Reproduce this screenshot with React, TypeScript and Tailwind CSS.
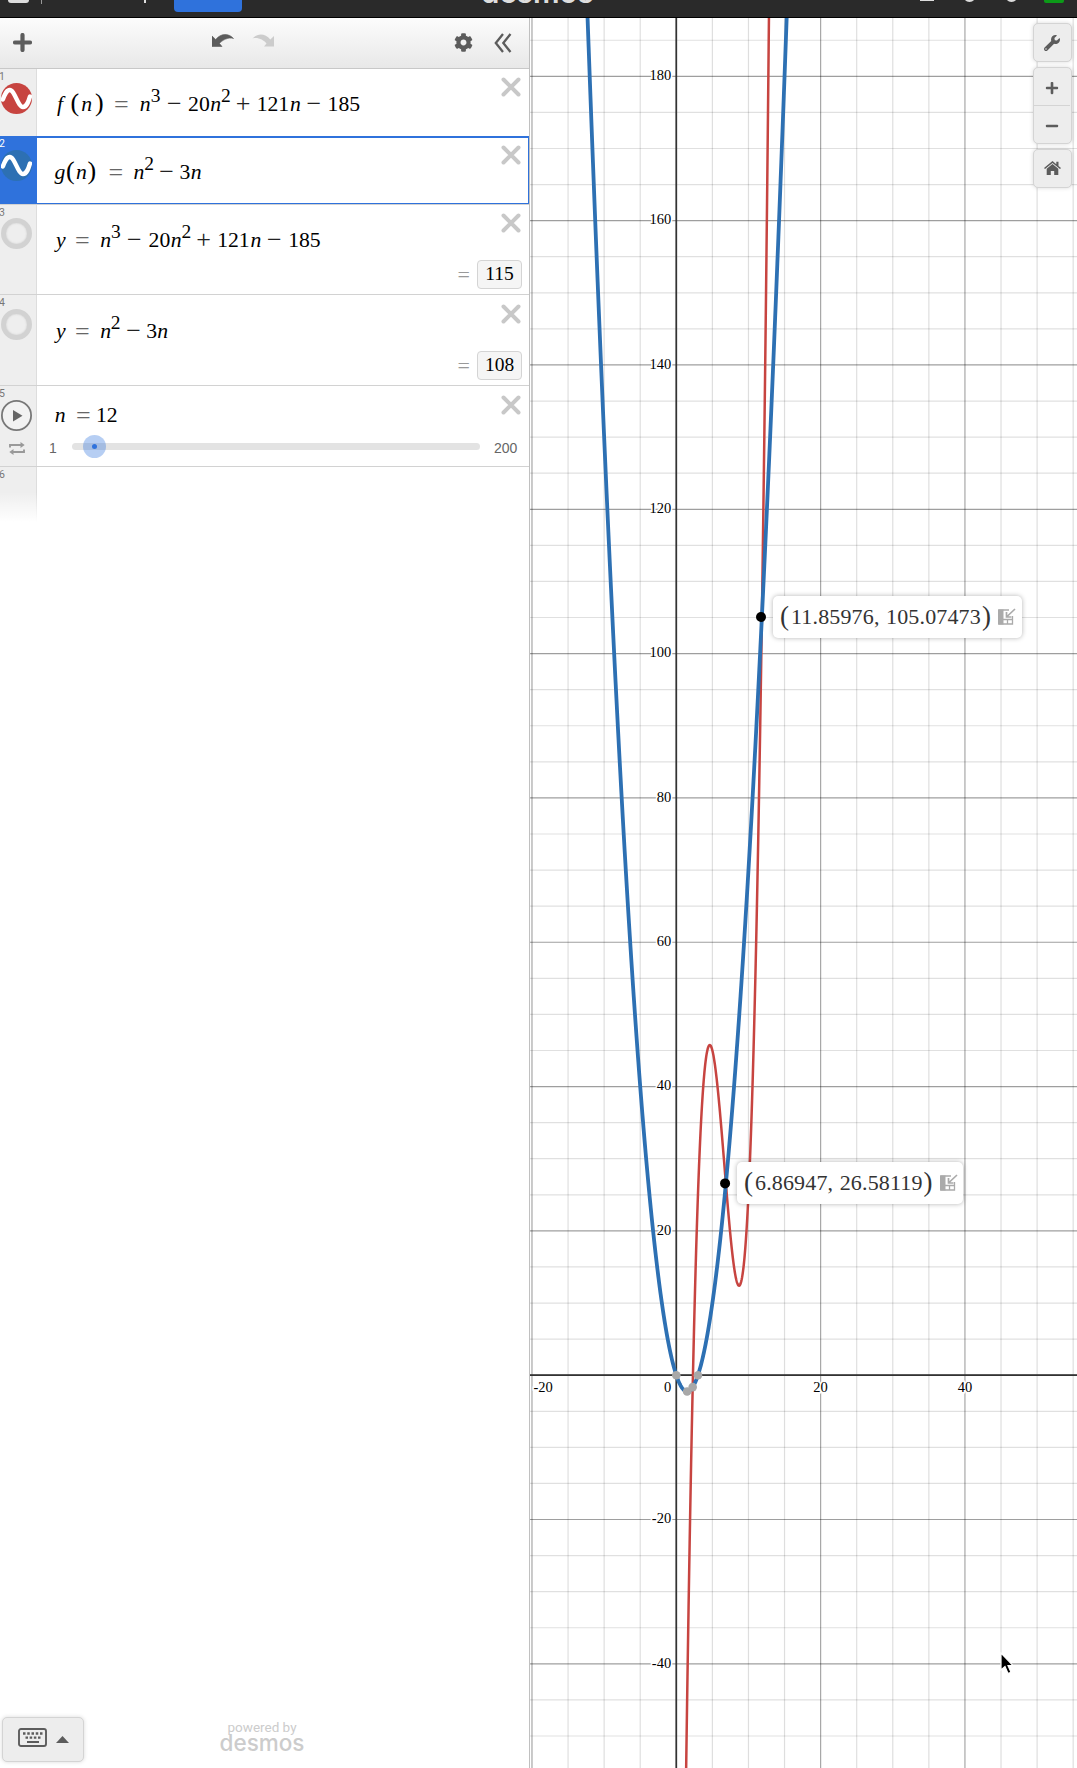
import React from "react";
import { FaWrench, FaPlus, FaMinus, FaCog } from "react-icons/fa";

type Kind = "i" | "d" | "s" | "o" | "e" | "p";
type Token = [Kind, string, number];

const tokenClass: Record<Kind, string> = {
  i: "italic",
  d: "",
  s: "relative -top-[9.5px] text-[19.5px]",
  o: "relative top-px text-[26px] text-[#222]",
  e: "relative top-[2px] text-[26px] text-[#666]",
  p: "text-[26px]",
};

// Each token: kind, glyphs, x position; the gap to the next token gives its width.
const cubic = (x: number, d: number): Token[] => [
  ["i", "n", x],
  ["s", "3", x + 11.2 - d],
  ["o", "−", x + 27.3 - d],
  ["d", "20", x + 48.4],
  ["i", "n", x + 70.7],
  ["s", "2", x + 81.4],
  ["o", "+", x + 96],
  ["d", "121", x + 117],
  ["i", "n", x + 150.3],
  ["o", "−", x + 166.8],
  ["d", "185", x + 188],
];

const equations: Token[][] = [
  [["i", "f", 57], ["p", "(", 70.5], ["i", "n", 81.2], ["p", ")", 95], ["e", "=", 114], ...cubic(139.7, 0)],
  [["i", "g", 54.5], ["p", "(", 66], ["i", "n", 76], ["p", ")", 87.5], ["e", "=", 108.5], ["i", "n", 133.6], ["s", "2", 144.3], ["o", "−", 159.2], ["d", "3", 179.5], ["i", "n", 190.7]],
  [["i", "y", 56], ["e", "=", 75], ...cubic(100.2, 0.5)],
  [["i", "y", 56], ["e", "=", 75], ["i", "n", 100.2], ["s", "2", 110.8], ["o", "−", 126.2], ["d", "3", 146.3], ["i", "n", 157.3]],
  [["i", "n", 54.7], ["e", "=", 76], ["d", "12", 96]],
];

function Equation({ tokens }: { tokens: Token[] }) {
  return (
    <div className="flex h-8 items-baseline whitespace-nowrap font-['Liberation_Serif',serif] text-[21.7px] leading-8 text-black" style={{ paddingLeft: tokens[0][2] - 37 }}>
      {tokens.map(([k, t, x], i) => (
        <span key={i} className={"block shrink-0 leading-8 " + tokenClass[k]} style={{ width: i + 1 < tokens.length ? tokens[i + 1][2] - x : "auto" }}>
          {t}
        </span>
      ))}
    </div>
  );
}

function Close({ className = "top-[8px]" }: { className?: string }) {
  return (
    <svg className={"absolute right-[8.5px] " + className} width="20" height="20" viewBox="0 0 20 20">
      <path d="M2.500 2.500 17.500 17.500M17.500 2.500 2.500 17.500" stroke="#c8c8c8" strokeWidth="4" strokeLinecap="round" />
    </svg>
  );
}

function Wave({ color }: { color: string }) {
  return (
    <svg width="31" height="31" viewBox="0 0 31 31">
      <circle cx="15.500" cy="15.500" r="15.500" fill={color} />
      <path d="M1.800 16.500C3.800 11.500 5.500 7 8.800 7c5 0 8 17 13.200 17 3.800 0 5.500-5.500 7-10.500" fill="none" stroke="#fff" strokeWidth="4.400" strokeLinecap="round" />
    </svg>
  );
}

const Ring = () => <div className="size-[31px] rounded-full border-[5px] border-[#d2d2d2] bg-[#eee] shadow-[inset_0_0_2px_#ccc]" />;

function Gutter({ n, active, low, children }: { n: number; active?: boolean; low?: boolean; children?: React.ReactNode }) {
  return (
    <div className={"relative w-[37px] shrink-0 border-r pl-px " + (low ? "pt-[14px] " : "pt-[13px] ") + (active ? "border-[#2f72dc] bg-[#2f72dc]" : "border-[#ddd] bg-[#eee]")}>
      <span className={"absolute left-[-1px] top-[2px] font-[Roboto,sans-serif] text-[10.5px] leading-3 " + (active ? "text-white" : "text-[#777]")}>{n}</span>
      {children}
    </div>
  );
}

function Result({ value }: { value: string }) {
  return (
    <div className="absolute bottom-[5px] right-[7px] flex items-center gap-[7px] font-['Liberation_Serif',serif]">
      <span className="pt-0.5 text-[22px] leading-7 text-[#999]">=</span>
      <span className="flex h-[29px] w-[45px] items-center justify-center rounded-[4px] border border-[#d4d4d4] bg-[#f5f5f5] text-[19.5px] text-black">{value}</span>
    </div>
  );
}

function Expressions() {
  const row = "relative flex border-b border-[#d2d2d2]";
  return (
    <div className="flex flex-col">
      <div className="relative flex h-[67px]">
        <Gutter n={1} low><Wave color="#c74440" /></Gutter>
        <div className="flex-1 pt-[18px]"><Equation tokens={equations[0]} /></div>
        <Close className="top-[7.500px]" />
      </div>
      <div className="relative flex h-[69px] border-b border-[#d2d2d2]">
        <Gutter n={2} active low><Wave color="#2d70b3" /></Gutter>
        <div className="flex-1 border-b border-r border-t-2 border-[#2f72dc] pt-[17px]"><Equation tokens={equations[1]} /></div>
        <Close className="top-[8.500px]" />
      </div>
      <div className={row + " h-[90px]"}>
        <Gutter n={3}><Ring /></Gutter>
        <div className="flex-1 pt-[18px]"><Equation tokens={equations[2]} /></div>
        <Close className="top-[7.500px]" />
        <Result value="115" />
      </div>
      <div className={row + " h-[91px]"}>
        <Gutter n={4} low><Ring /></Gutter>
        <div className="flex-1 pt-[19px]"><Equation tokens={equations[3]} /></div>
        <Close className="top-[8.500px]" />
        <Result value="108" />
      </div>
      <div className={row + " h-[81px]"}>
        <Gutter n={5} low>
          <svg width="31" height="31" viewBox="0 0 31 31">
            <circle cx="15.500" cy="15.500" r="14.600" fill="#f2f2f2" stroke="#777" strokeWidth="1.800" />
            <path d="M12 10v11.500l9.500-5.700z" fill="#666" />
          </svg>
          <svg className="ml-2 mt-[11px]" width="16" height="13" viewBox="0 0 16 13" fill="none" stroke="#999" strokeWidth="1.900">
            <path d="M1 5.500V3h12M15 7.500V10H3" />
            <path d="M11.500 0 15.700 3 11.500 6zM4.500 7 .3 10l4.200 3z" fill="#999" stroke="none" />
          </svg>
        </Gutter>
        <div className="flex-1 pt-[12px]">
          <Equation tokens={equations[4]} />
          <div className="mt-[4px] flex h-6 items-center font-['Liberation_Sans',sans-serif] text-[14px] text-[#666]">
            <span className="w-[35px] pl-3 pt-1">1</span>
            <div className="relative h-[7px] w-[408px] rounded-full bg-[#e3e3e3]">
              <div className="absolute left-[11px] top-[-8px] flex size-[23px] items-center justify-center rounded-full bg-[#2f72dc]/35">
                <div className="size-[5px] rounded-full bg-[#2f72dc]" />
              </div>
            </div>
            <span className="pl-[14px] pt-1">200</span>
          </div>
        </div>
        <Close className="top-[8.500px]" />
      </div>
      <div className="relative flex h-[55px]">
        <Gutter n={6} />
        <div className="absolute inset-x-0 bottom-0 h-[30px] bg-gradient-to-b from-white/0 to-white" />
      </div>
    </div>
  );
}

const OX = 146.3; // origin inside the plot
const OY = 1357.2;
const U = 7.216; // pixels per unit
const sx = (x: number) => OX + x * U;
const sy = (y: number) => OY - y * U;

function curve(f: (x: number) => number, a: number, b: number) {
  const pts: string[] = [];
  for (let x = a; x <= b; x += 0.05) pts.push(sx(x).toFixed(2) + "," + sy(f(x)).toFixed(2));
  return pts.join(" ");
}

const f = (n: number) => n ** 3 - 20 * n * n + 121 * n - 185;
const g = (n: number) => n * n - 3 * n;

function Plot() {
  const xs = Array.from({ length: 16 }, (_, i) => -20 + i * 5);
  const ys = Array.from({ length: 48 }, (_, i) => -50 + i * 5);
  const yl = [180, 160, 140, 120, 100, 80, 60, 40, 20, -20, -40];
  return (
    <svg className="block" width="547" height="1750" viewBox="0 0 547 1750">
      {xs.map((x) => <line key={x} x1={sx(x)} x2={sx(x)} y1="0" y2="1750" stroke="#000" strokeOpacity={x % 20 ? 0.13 : 0.35} strokeWidth="1.200" />)}
      {ys.map((y) => <line key={y} y1={sy(y)} y2={sy(y)} x1="0" x2="547" stroke="#000" strokeOpacity={y % 20 ? 0.12 : 0.38} strokeWidth="1.200" />)}
      <path d={`M0 ${sy(0)}H547M${OX} 0V1750`} stroke="#333" strokeWidth="1.700" />
      <g fontFamily="Liberation Serif, serif" fontSize="14.500" fill="#000" stroke="#fff" strokeWidth="3" paintOrder="stroke">
        {yl.map((y) => <text key={y} x="141.200" y={sy(y) + 3.7} textAnchor="end">{y}</text>)}
        <text x="141.200" y="1373.500" textAnchor="end">0</text>
        <text x="3.500" y="1373.500">-20</text>
        <text x={sx(20)} y="1373.500" textAnchor="middle">20</text>
        <text x={sx(40)} y="1373.500" textAnchor="middle">40</text>
      </g>
      <polyline points={curve(f, 1, 13.5)} fill="none" stroke="#c74440" strokeWidth="2.500" />
      <polyline points={curve(g, -13, 16)} fill="none" stroke="#2d70b3" strokeWidth="3.800" />
      <g fill="#a8a8a8">
        {[[0, 0], [3, 0], [1.5, -2.25], [2.27, -1.65]].map(([x, y], i) => <circle key={i} cx={sx(x)} cy={sy(y)} r="4.300" />)}
      </g>
      <circle cx={sx(11.74)} cy={sy(105.07)} r="5" />
      <circle cx={sx(6.76)} cy={sy(26.58)} r="5" />
    </svg>
  );
}

function PointLabel({ a, b, className }: { a: string; b: string; className: string }) {
  return (
    <div className={"absolute flex h-[42px] items-center rounded-[5px] bg-white pb-0.5 font-['Liberation_Serif',serif] text-[22px] text-[#333] shadow-[0_0_5px_rgba(0,0,0,0.3)] " + className}>
      <span className="w-[13px] pl-0.5 text-[27px] leading-8">(</span>
      <span className="tracking-[0.15px]">{a},</span>
      <span className="ml-[6.500px] tracking-[0.15px]">{b}</span>
      <span className="w-[12px] shrink-0 pl-px text-[27px] leading-8">)</span>
      <svg className="ml-[4px] mt-0.5 shrink-0" width="19" height="18" viewBox="0 0 19 18" fill="none" stroke="#aaa" strokeWidth="1.300">
        <path d="M12 2H2v14h13.500V8M6 11.500h9M10.500 11.500V16" />
        <path d="M1 1.500h5.500v15H1z" fill="#aaa" stroke="none" />
        <path d="M18 1l-8 7.500M9.500 4v5h5" strokeWidth="1.700" />
      </svg>
    </div>
  );
}

function HomeIcon() {
  return (
    <svg width="17" height="15" viewBox="0 0 17 15" fill="#5c5c5c">
      <path d="M8.500 0 0 7l1 1.100 7.500-6.200L16 8.100 17 7l-2.500-2V.7h-2.200v2.500z" />
      <path d="M8.500 3 2.700 7.800V14h4.100v-4h3.400v4h4.100V7.800z" />
    </svg>
  );
}

export default function App() {
  const box = "border border-[#d4d4d4] bg-[#ededed] text-[#5c5c5c] shadow-[0_0_4px_rgba(0,0,0,0.15)]";
  return (
    <div className="flex h-[1768px] w-[1077px] flex-col overflow-hidden bg-white">
      <header className="relative h-[18px] shrink-0 overflow-hidden border-b border-black bg-[#2a2a2a]">
        <div className="absolute left-2 top-[-8px] h-[11px] w-[21px] rounded-[3px] bg-[#ddd]" />
        <div className="absolute left-[41px] top-0 h-1 w-px bg-[#999]" />
        <div className="absolute left-[144px] top-0 h-[3px] w-[1.500px] bg-[#ddd]" />
        <div className="absolute left-[174px] top-[-10px] h-[22px] w-[68px] rounded-[4px] bg-[#2f72dc]" />
        <div className="absolute left-[481px] top-[-30px] font-[Inter,sans-serif] text-[29.500px] font-semibold leading-[44px] text-[#ddd]">desmos</div>
        <div className="absolute left-[920px] top-[-8px] h-[9px] w-[14px] bg-[#ddd]" />
        <div className="absolute left-[963px] top-[-11px] size-[13px] rounded-full bg-[#ddd]" />
        <div className="absolute left-[1005px] top-[-11px] size-[13px] rounded-full border-2 border-[#ddd]" />
        <div className="absolute left-[1044px] top-[-8px] h-[11px] w-5 rounded-[2px] bg-[#0c9a18]" />
      </header>
      <div className="flex min-h-0 flex-1">
        <aside className="relative flex w-[530px] shrink-0 flex-col border-r border-[#c0c0c0] bg-white">
          <div className="flex h-[51px] shrink-0 items-center border-b border-[#c8c8c8] bg-gradient-to-b from-[#fcfcfc] to-[#e8e8e8] pb-px pl-[13px] pr-[17px] text-[#5c5c5c]">
            <svg width="19" height="19" viewBox="0 0 19 19"><path d="M9.500 2v15M2 9.500h15" stroke="#5c5c5c" strokeWidth="4.200" strokeLinecap="round" /></svg>
            <svg className="ml-[180px] mb-1" width="22" height="14" viewBox="0 0 22 14"><path d="M0 2v10.500h10L7.500 9.500C10.500 6 16 3 21.500 4.500 17-.8 9-1.200 3.700 5.500z" fill="#5c5c5c" stroke="#5c5c5c" strokeWidth="0.600" /></svg>
            <svg className="ml-[18px] mb-1 -scale-x-100" width="22" height="14" viewBox="0 0 22 14"><path d="M0 2v10.500h10L7.500 9.500C10.500 6 16 3 21.500 4.500 17-.8 9-1.200 3.700 5.500z" fill="#ccc" /></svg>
            <FaCog className="ml-auto" size={19} />
            <svg className="ml-[21px]" width="18" height="20" viewBox="0 0 18 20" fill="none" stroke="#5c5c5c" strokeWidth="2.300"><path d="M9 1 1.800 10 9 19M16.500 1 9.300 10l7.200 9" /></svg>
          </div>
          <Expressions />
          <div className={"absolute bottom-[6px] left-[2px] flex h-[45px] w-[82px] items-center rounded-[5px] pl-[15px] " + box}>
            <svg className="mb-[5px]" width="29" height="19" viewBox="0 0 29 19">
              <rect x="1" y="1" width="27" height="17" rx="2" fill="none" stroke="#5c5c5c" strokeWidth="1.900" />
              <path d="M5 5.500h19.500" stroke="#5c5c5c" strokeWidth="2.300" strokeDasharray="2.500 1.750" />
              <path d="M7.500 9.700h15" stroke="#5c5c5c" strokeWidth="2.300" strokeDasharray="2.500 1.670" />
              <path d="M9 14h12" stroke="#5c5c5c" strokeWidth="2" />
            </svg>
            <svg className="ml-[9px]" width="13" height="7" viewBox="0 0 13 7"><path d="M0 7 6.500 0 13 7z" fill="#5c5c5c" /></svg>
          </div>
          <div className="absolute bottom-[18px] left-[180px] flex w-[164px] flex-col text-center text-[#ccc]">
            <div className="h-[16px] font-[Roboto,sans-serif] text-[13.500px] leading-[14px]">powered by</div>
            <div className="font-[Inter,sans-serif] text-[22.500px] font-medium leading-[14px]">desmos</div>
          </div>
        </aside>
        <main className="relative min-w-0 flex-1">
          <Plot />
          <PointLabel className="left-[243px] top-[578px] w-[249px] pl-[5px]" a="11.85976" b="105.07473" />
          <PointLabel className="left-[207px] top-[1144px] w-[226px] pl-[5px]" a="6.86947" b="26.58119" />
          <div className="absolute right-[5px] top-[5px] flex w-[39px] flex-col">
            <div className={"flex h-[39px] items-center justify-center rounded-[5px] pr-px " + box}><FaWrench size={16} /></div>
            <div className={"mt-[5px] flex h-[77px] flex-col rounded-[5px] pr-px " + box}>
              <div className="flex flex-1 items-center justify-center border-b border-[#d4d4d4] pt-0.5"><FaPlus size={14} /></div>
              <div className="flex flex-1 items-center justify-center pt-0.5"><FaMinus size={14} /></div>
            </div>
            <div className={"mt-[5px] flex h-[39px] items-center justify-center rounded-[5px] pr-px " + box}><HomeIcon /></div>
          </div>
          <svg className="absolute left-[470px] top-[1634px]" width="14" height="23" viewBox="0 0 14 23">
            <path d="M1 1v17l4-3.500 3 7 3-1.300-3-6.700h5z" fill="#000" stroke="#fff" strokeWidth="1.200" />
          </svg>
        </main>
      </div>
    </div>
  );
}
